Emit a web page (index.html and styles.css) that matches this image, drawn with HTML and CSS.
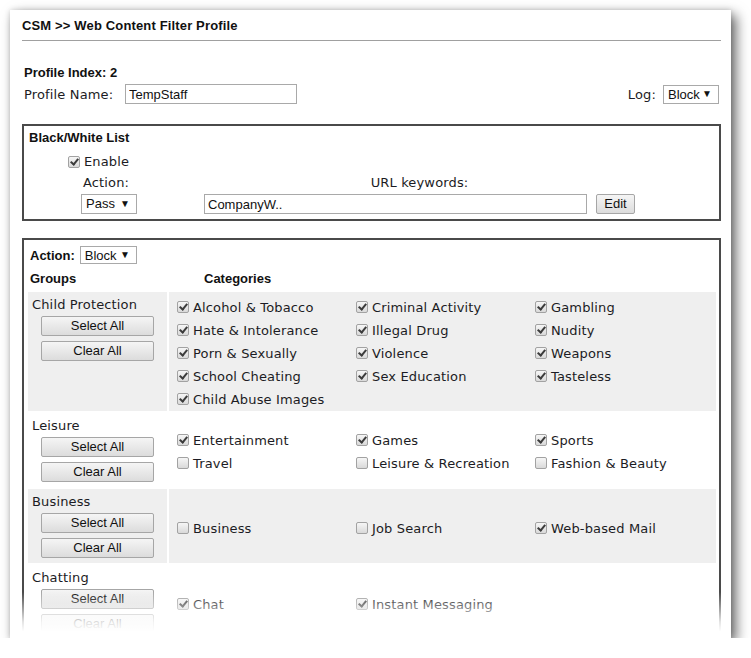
FILE: index.html
```html
<!DOCTYPE html>
<html>
<head>
<meta charset="utf-8">
<title>CSM >> Web Content Filter Profile</title>
<link rel="stylesheet" href="styles.css">
</head>
<body>
<div class="window">
  <div class="page">
    <h1 class="title">CSM &gt;&gt; Web Content Filter Profile</h1>

    <div class="profile">
      <div class="index">Profile Index: 2</div>
      <div class="name-row">
        <span class="v name-lbl">Profile Name:</span>
        <input class="text name-input" type="text" value="TempStaff">
        <span class="spacer"></span>
        <span class="v log-lbl">Log:</span>
        <span class="select log-select">Block<span class="arrow">&#9660;</span></span>
      </div>
    </div>

    <section class="box bw">
      <div class="box-title">Black/White List</div>
      <div class="enable v"><span class="cb on"></span>Enable</div>
      <div class="bw-grid">
        <div class="v action-lbl">Action:</div>
        <div class="v url-lbl">URL keywords:</div>
        <div><span class="select pass-select">Pass<span class="arrow">&#9660;</span></span></div>
        <div class="url-row"><input class="text url-input" type="text" value="CompanyW.."><button class="btn edit">Edit</button></div>
      </div>
    </section>

    <section class="box cats">
      <div class="cat-action"><span class="b">Action:</span><span class="select block-select">Block<span class="arrow">&#9660;</span></span></div>
      <div class="cat-table">
        <div class="th">Groups</div>
        <div class="th th-cat">Categories</div>

        <div class="group gray">
          <div class="v gname">Child Protection</div>
          <button class="btn gbtn">Select All</button>
          <button class="btn gbtn">Clear All</button>
        </div>
        <div class="items gray">
          <div class="item"><span class="cb on"></span>Alcohol &amp; Tobacco</div>
          <div class="item"><span class="cb on"></span>Criminal Activity</div>
          <div class="item"><span class="cb on"></span>Gambling</div>
          <div class="item"><span class="cb on"></span>Hate &amp; Intolerance</div>
          <div class="item"><span class="cb on"></span>Illegal Drug</div>
          <div class="item"><span class="cb on"></span>Nudity</div>
          <div class="item"><span class="cb on"></span>Porn &amp; Sexually</div>
          <div class="item"><span class="cb on"></span>Violence</div>
          <div class="item"><span class="cb on"></span>Weapons</div>
          <div class="item"><span class="cb on"></span>School Cheating</div>
          <div class="item"><span class="cb on"></span>Sex Education</div>
          <div class="item"><span class="cb on"></span>Tasteless</div>
          <div class="item"><span class="cb on"></span>Child Abuse Images</div>
        </div>

        <div class="group">
          <div class="v gname">Leisure</div>
          <button class="btn gbtn">Select All</button>
          <button class="btn gbtn">Clear All</button>
        </div>
        <div class="items">
          <div class="item"><span class="cb on"></span>Entertainment</div>
          <div class="item"><span class="cb on"></span>Games</div>
          <div class="item"><span class="cb on"></span>Sports</div>
          <div class="item"><span class="cb"></span>Travel</div>
          <div class="item"><span class="cb"></span>Leisure &amp; Recreation</div>
          <div class="item"><span class="cb"></span>Fashion &amp; Beauty</div>
        </div>

        <div class="group gray">
          <div class="v gname">Business</div>
          <button class="btn gbtn">Select All</button>
          <button class="btn gbtn">Clear All</button>
        </div>
        <div class="items gray">
          <div class="item"><span class="cb"></span>Business</div>
          <div class="item"><span class="cb"></span>Job Search</div>
          <div class="item"><span class="cb on"></span>Web-based Mail</div>
        </div>

        <div class="group">
          <div class="v gname">Chatting</div>
          <button class="btn gbtn">Select All</button>
          <button class="btn gbtn">Clear All</button>
        </div>
        <div class="items">
          <div class="item"><span class="cb on"></span>Chat</div>
          <div class="item"><span class="cb on"></span>Instant Messaging</div>
        </div>
      </div>
    </section>
  </div>
  <div class="fade"></div>
</div>
</body>
</html>
```

FILE: styles.css
```css
html, body {
  margin: 0;
  padding: 0;
  background: #ffffff;
}

body {
  font-family: "Liberation Sans", Arial, sans-serif;
  font-size: 13px;
  color: #111;
}

.window {
  position: relative;
  margin: 10px 0 0 10px;
  width: 721px;
  height: 628px;
  background: #fff;
  overflow: hidden;
  box-shadow: 5px 5px 12px rgba(0, 0, 0, 0.6), 0 0 5px rgba(0, 0, 0, 0.15);
}

.page {
  padding: 8px 10px 0 12px;
}

.v {
  font-family: "DejaVu Sans", Verdana, sans-serif;
  font-size: 13px;
  letter-spacing: 0.15px;
  color: #1c1c24;
}

.b {
  font-weight: bold;
}

.title {
  margin: 0;
  font-size: 13px;
  line-height: 16px;
  font-weight: bold;
  letter-spacing: 0.15px;
  color: #111;
  padding-bottom: 6px;
  border-bottom: 1px solid #a0a0a0;
}

.profile {
  margin-top: 24px;
  padding-left: 2px;
}

.index {
  font-weight: bold;
  line-height: 16px;
}

.name-row {
  display: flex;
  align-items: center;
  height: 20px;
  margin-top: 3px;
  margin-right: 2px;
}

.name-lbl {
  width: 101px;
  line-height: 16px;
  padding-top: 1px;
}

.text {
  box-sizing: border-box;
  height: 20px;
  border: 1px solid #a9a9a9;
  padding: 0 3px;
  margin: 0;
  font-family: "Liberation Sans", Arial, sans-serif;
  font-size: 13px;
  color: #111;
  background: #fff;
  outline: none;
}

.name-input {
  width: 172px;
}

.spacer {
  flex: 1;
}

.log-lbl {
  margin-right: 7px;
  padding-top: 1px;
}

.select {
  box-sizing: border-box;
  display: inline-flex;
  align-items: center;
  justify-content: space-between;
  height: 19px;
  border: 1px solid #a9a9a9;
  background: #fff;
  padding: 0 6px 0 4px;
  font-family: "Liberation Sans", Arial, sans-serif;
  font-size: 13px;
  color: #111;
}

.arrow {
  font-size: 10px;
  line-height: 10px;
  color: #111;
}

.log-select {
  width: 56px;
}

.box {
  border: 2px solid #4a4a4a;
}

.bw {
  margin-top: 20px;
  padding-bottom: 5px;
}

.box-title {
  font-weight: bold;
  line-height: 16px;
  padding: 4px 0 0 5px;
}

.enable {
  display: flex;
  align-items: center;
  line-height: 16px;
  margin: 8px 0 0 44px;
}

.bw-grid {
  display: grid;
  grid-template-columns: 123px 431px;
  grid-template-rows: 17px 20px;
  row-gap: 3px;
  margin: 4px 0 0 57px;
  line-height: 16px;
}

.action-lbl {
  padding: 1px 0 0 2px;
}

.url-lbl {
  padding-top: 1px;
  text-align: center;
}

.pass-select {
  width: 56px;
  height: 20px;
}

.url-row {
  display: flex;
  justify-content: space-between;
}

.url-input {
  width: 383px;
}

.btn {
  box-sizing: border-box;
  height: 20px;
  margin: 0;
  padding: 0;
  border: 1px solid #a6a6a6;
  border-radius: 2px;
  background: linear-gradient(#f5f5f5, #dcdcdc);
  font-family: "Liberation Sans", Arial, sans-serif;
  font-size: 13px;
  color: #111;
  line-height: 18px;
}

.edit {
  width: 39px;
}

.cats {
  margin-top: 17px;
  padding-bottom: 10px;
}

.cat-action {
  display: flex;
  align-items: center;
  height: 18px;
  padding: 6px 0 0 6px;
}

.block-select {
  width: 57px;
  height: 18px;
  margin-left: 5px;
}

.cat-table {
  display: grid;
  grid-template-columns: 139px 547px;
  column-gap: 2px;
  row-gap: 2px;
  margin: 6px 0 0 4px;
}

.th {
  font-weight: bold;
  line-height: 16px;
  padding: 1px 0 0 2px;
  margin-bottom: 3px;
}

.th-cat {
  padding-left: 35px;
}

.gray {
  background: #efefef;
}

.group {
  display: flex;
  flex-direction: column;
  padding: 5px 0 5px 4px;
  min-height: 64px;
}

.gname {
  line-height: 16px;
}

.gbtn {
  width: 113px;
  margin: 3px 0 0 9px;
}

.gbtn + .gbtn {
  margin-top: 5px;
}

.items {
  display: grid;
  grid-template-columns: repeat(3, 179px);
  grid-auto-rows: 23px;
  align-content: center;
  padding: 4px 0 0 8px;
}

.item {
  display: flex;
  align-items: center;
  font-family: "DejaVu Sans", Verdana, sans-serif;
  font-size: 13px;
  letter-spacing: 0.15px;
  color: #1c1c24;
  white-space: nowrap;
}

.cb {
  position: relative;
  flex: none;
  display: inline-block;
  box-sizing: border-box;
  width: 12px;
  height: 12px;
  margin: -1px 4px 0 0;
  border: 1px solid #a2a2a2;
  border-radius: 2px;
  background: linear-gradient(#f6f6f6, #d9d9d9);
}

.cb.on::after {
  content: "";
  position: absolute;
  left: 3px;
  top: 0px;
  width: 3px;
  height: 6px;
  border: solid #3c3c3c;
  border-width: 0 2px 2px 0;
  transform: rotate(40deg);
}

.fade {
  position: absolute;
  left: 0;
  right: 0;
  bottom: 0;
  height: 46px;
  background: linear-gradient(to bottom, rgba(255, 255, 255, 0) 0%, rgba(255, 255, 255, 0.85) 65%, #fff 86%);
}
```
